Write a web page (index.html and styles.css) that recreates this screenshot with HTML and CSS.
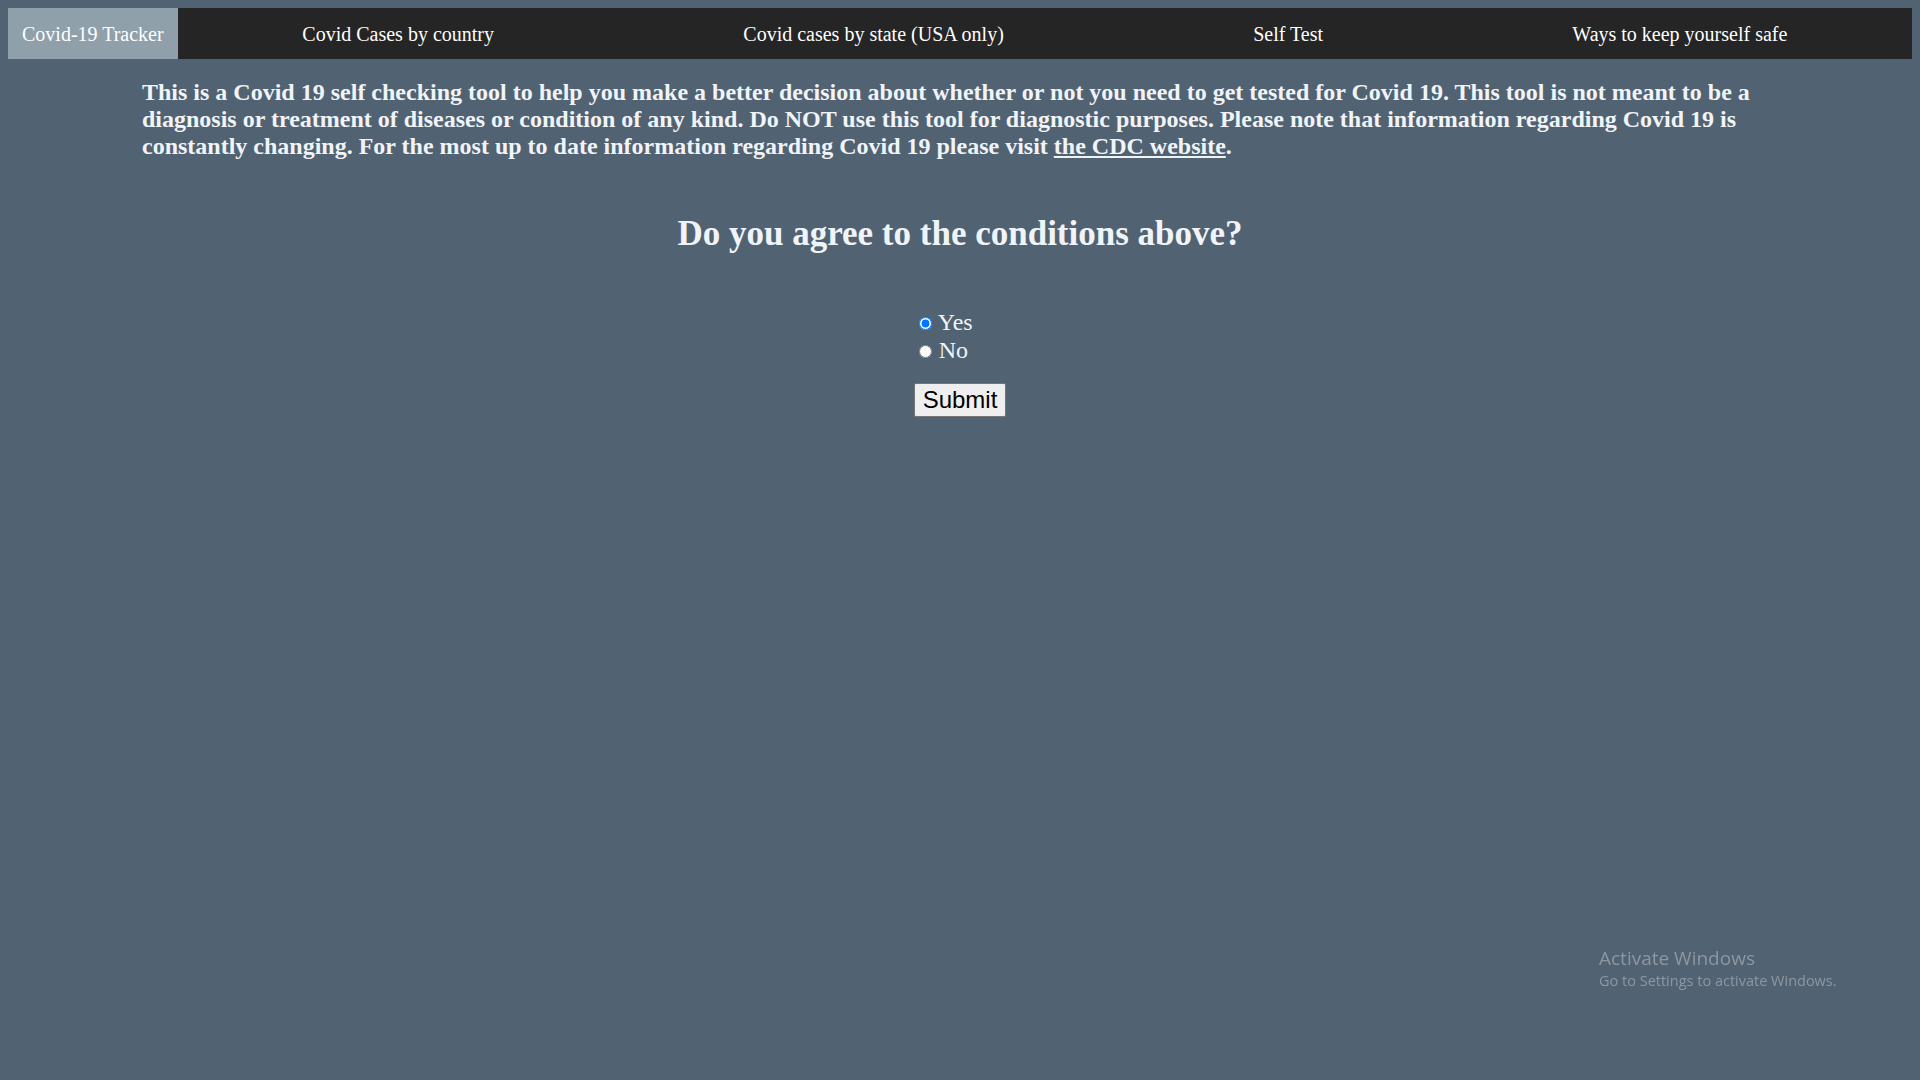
FILE: index.html
```html
<!DOCTYPE html>
<html lang="en">
<head>
<meta charset="utf-8">
<title>Covid-19 Tracker - Self Test</title>
<link rel="stylesheet" href="styles.css">
</head>
<body>
<nav class="topnav">
  <a class="nav-brand" href="#">Covid-19 Tracker</a>
  <div class="nav-links">
    <a class="nav-link" href="#">Covid Cases by country</a>
    <a class="nav-link" href="#">Covid cases by state (USA only)</a>
    <a class="nav-link" href="#">Self Test</a>
    <a class="nav-link" href="#">Ways to keep yourself safe</a>
  </div>
</nav>
<main class="content">
  <p class="intro">This is a Covid 19 self checking tool to help you make a better decision about whether or not you need to get tested for Covid 19. This tool is not meant to be a diagnosis or treatment of diseases or condition of any kind. Do NOT use this tool for diagnostic purposes. Please note that information regarding Covid 19 is constantly changing. For the most up to date information regarding Covid 19 please visit <a class="intro-link" href="#">the CDC website</a>.</p>
  <h2 class="question">Do you agree to the conditions above?</h2>
  <div class="form-wrap">
    <form class="consent">
      <label class="choice"><input class="radio" type="radio" name="agree" value="yes" checked> Yes</label>
      <label class="choice"><input class="radio" type="radio" name="agree" value="no"> No</label>
      <button class="submit" type="button">Submit</button>
    </form>
  </div>
</main>
<div class="watermark">
  <div class="wm-title">Activate Windows</div>
  <div class="wm-sub">Go to Settings to activate Windows.</div>
</div>
</body>
</html>
```
FILE: styles.css
```css
html, body {
  height: 100%;
}
body {
  margin: 8px;
  background: #516272;
  font-family: "Liberation Serif", "Times New Roman", serif;
  color: #f0f4f8;
}
.topnav {
  display: flex;
  background: #252525;
  height: 51px;
}
.nav-brand {
  display: block;
  background: #8fa0aa;
  color: #ffffff;
  text-decoration: none;
  font-size: 20px;
  line-height: 23px;
  padding: 15px 14px 0 14px;
  white-space: nowrap;
}
.nav-links {
  flex: 1;
  display: flex;
  justify-content: space-around;
}
.nav-link {
  color: #ffffff;
  text-decoration: none;
  font-size: 20px;
  line-height: 23px;
  padding-top: 15px;
  white-space: nowrap;
}
.content {
  display: flex;
  flex-direction: column;
  align-items: center;
}
.intro {
  width: 1636px;
  margin: 20px 0 0 0;
  font-size: 24px;
  font-weight: bold;
  color: #f0f4f8;
}
.intro-link {
  color: #f0f4f8;
  text-decoration: underline;
}
.question {
  margin: 54px 0 0 0;
  font-size: 35px;
  font-weight: bold;
  color: #f0f4f8;
}
.form-wrap {
  margin-top: 54px;
}
.consent {
  display: flex;
  flex-direction: column;
  align-items: flex-start;
}
.choice {
  font-size: 24px;
  line-height: 28px;
  color: #f0f4f8;
}
.radio {
  margin: 3px 1px 0 5px;
  accent-color: #0075ff;
}
.submit {
  margin-top: 19px;
  font-family: "Liberation Sans", Arial, sans-serif;
  font-size: 24px;
  padding: 2px 8px;
  background: #efefef;
  border: 1px solid #767676;
  border-radius: 2px;
  color: #000000;
}
.watermark {
  position: fixed;
  left: 1599px;
  top: 946px;
  font-family: "Open Sans", "Noto Sans", sans-serif;
  color: #8d97a2;
}
.wm-title {
  font-size: 19px;
  line-height: 25px;
}
.wm-sub {
  font-size: 14.5px;
  line-height: 20px;
}
```
